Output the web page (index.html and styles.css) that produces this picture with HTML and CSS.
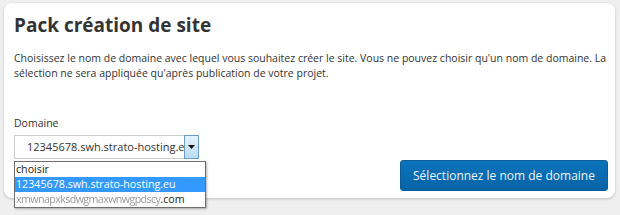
FILE: index.html
```html
<!DOCTYPE html>
<html lang="fr">
<head>
<meta charset="utf-8">
<title>Pack création de site</title>
<link rel="stylesheet" href="styles.css">
</head>
<body>
<div class="card">
  <h1 class="title">Pack création de site</h1>
  <p class="intro">Choisissez le nom de domaine avec lequel vous souhaitez créer le site. Vous ne pouvez choisir qu'un nom de domaine. La sélection ne sera appliquée qu'après publication de votre projet.</p>
  <div class="row">
    <div class="field">
      <div class="label">Domaine</div>
      <div class="select">
        <span class="select-value">12345678.swh.strato-hosting.eu</span>
        <span class="select-btn"><svg width="7" height="4" viewBox="0 0 7 4"><path d="M0 0H7L3.5 4Z" fill="#111"/></svg></span>
      </div>
      <ul class="list">
        <li class="opt">choisir</li>
        <li class="opt selected">12345678.swh.strato-hosting.eu</li>
        <li class="opt"><span class="blur">xmwnapxksdwgmaxwnwgpdscy</span>.com</li>
      </ul>
    </div>
    <button class="btn">Sélectionnez le nom de domaine</button>
  </div>
</div>
</body>
</html>
```
FILE: styles.css
```css
html, body { margin: 0; padding: 0; }
body {
  background: #efefef;
  font-family: "Open Sans", "Liberation Sans", sans-serif;
  color: #333;
  width: 620px;
  height: 215px;
  overflow: hidden;
}
.card {
  box-sizing: border-box;
  margin: 3px 5px 0 4px;
  height: 195px;
  background: #fff;
  border-radius: 8px;
  box-shadow: 0 1px 3px rgba(0,0,0,0.2);
  padding: 8px 7px 0 10px;
}
.title {
  margin: 0;
  font-size: 19px;
  font-weight: 700;
  line-height: 28px;
  color: #333;
}
.intro {
  margin: 12px 0 0 0;
  font-size: 10.5px;
  line-height: 14.5px;
  color: #333;
}
.row {
  display: flex;
  justify-content: space-between;
  align-items: flex-start;
  margin-top: 36px;
}
.field { position: relative; width: 192px; }
.label {
  font-size: 10.5px;
  line-height: 15px;
  margin-bottom: 4px;
}
.select {
  box-sizing: border-box;
  width: 185px;
  height: 24px;
  border: 1px solid #cdcdcd;
  display: flex;
  align-items: stretch;
  background: #fff;
}
.select-value {
  flex: 1;
  overflow: hidden;
  white-space: nowrap;
  font-size: 11px;
  line-height: 22px;
  padding-left: 12px;
  color: #333;
}
.select-btn {
  box-sizing: border-box;
  width: 15px;
  border: 1px solid #6a9cc9;
  margin: -1px -1px -1px 0;
  background: linear-gradient(#e4f2fb, #b9dcf4);
  display: flex;
  align-items: center;
  justify-content: center;
}
.list {
  position: absolute;
  left: 0;
  top: 45px;
  width: 192px;
  box-sizing: border-box;
  margin: 0;
  padding: 0;
  list-style: none;
  background: #fff;
  border: 1px solid #6e6e6e;
  box-shadow: 1px 1px 2px rgba(0,0,0,0.3);
}
.opt {
  font-size: 10.7px;
  line-height: 15px;
  height: 15px;
  padding-left: 1px;
  color: #222;
  white-space: nowrap;
  overflow: hidden;
}
.opt.selected { background: #3399ff; color: #fff; }
.blur { color: #9a9a9a; filter: blur(0.6px); letter-spacing: -0.6px; }
.btn {
  margin-top: 44px;
  width: 208px;
  height: 31px;
  padding: 0;
  border: 1px solid #0b5c98;
  border-radius: 3px;
  background: linear-gradient(#0b74bb, #0863a6);
  color: #eef4fa;
  font-family: "Open Sans", "Liberation Sans", sans-serif;
  font-size: 12px;
}
```
